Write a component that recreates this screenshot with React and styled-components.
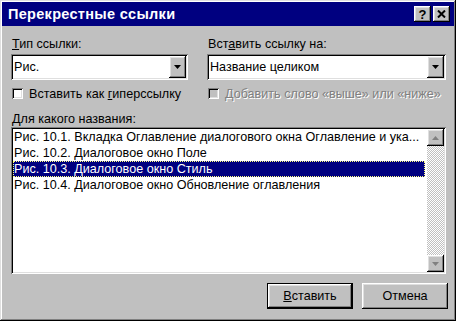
import styled, { createGlobalStyle } from 'styled-components';

const GlobalStyle = createGlobalStyle`
  html, body {
    margin: 0;
    padding: 0;
    background: #c0c0c0;
  }
  body {
    font-family: "Liberation Sans", Arial, sans-serif;
    font-size: 12.6px;
    color: #000;
  }
`;

const raisedShadow = `
  box-shadow: inset -1px -1px #000, inset 1px 1px #fff,
    inset -2px -2px #808080, inset 2px 2px #dfdfdf;
`;

const sunkenShadow = `
  box-shadow: inset 1px 1px #808080, inset -1px -1px #fff,
    inset 2px 2px #000, inset -2px -2px #dfdfdf;
`;

const Window = styled.div`
  width: 456px;
  height: 321px;
  box-sizing: border-box;
  padding: 2px;
  background: #c0c0c0;
  box-shadow: inset -1px -1px #000, inset 1px 1px #dfdfdf,
    inset -2px -2px #808080, inset 2px 2px #fff;
  display: flex;
  flex-direction: column;
`;

const TitleBar = styled.div`
  height: 24px;
  background: #000080;
  display: flex;
  align-items: center;
  justify-content: space-between;
  padding: 0 4px 0 6px;
`;

const Title = styled.span`
  color: #fff;
  font-weight: bold;
  font-size: 14.5px;
  letter-spacing: 0.3px;
`;

const TitleButtons = styled.div`
  display: flex;
  gap: 2px;
`;

const TitleButton = styled.div`
  width: 17px;
  height: 16px;
  background: #c0c0c0;
  ${raisedShadow}
  display: flex;
  align-items: center;
  justify-content: center;
  font-weight: bold;
  font-size: 13px;
  line-height: 1;
`;

const Content = styled.div`
  flex: 1;
  display: flex;
  flex-direction: column;
  padding: 10px 8px 0 9px;
`;

const Columns = styled.div`
  display: grid;
  grid-template-columns: 177px 1fr;
  column-gap: 19px;
`;

const Field = styled.div`
  display: flex;
  flex-direction: column;
`;

const Label = styled.div`
  height: 16px;
  line-height: 16px;
  padding-left: 1px;
`;

const Combo = styled.div`
  margin-top: 2px;
  height: 26px;
  box-sizing: border-box;
  padding: 2px;
  background: #fff;
  ${sunkenShadow}
  display: flex;
  align-items: stretch;
`;

const ComboText = styled.div`
  flex: 1;
  padding-left: 1px;
  display: flex;
  align-items: center;
`;

const ComboButton = styled.div`
  width: 17px;
  background: #c0c0c0;
  ${raisedShadow}
  display: flex;
  align-items: center;
  justify-content: center;
`;

const CheckRow = styled.div`
  margin-top: 6px;
  height: 15px;
  display: flex;
  align-items: center;
  gap: 6px;
  padding-left: 1px;
  color: ${p => (p.$disabled ? '#808080' : '#000')};
  text-shadow: ${p => (p.$disabled ? '1px 1px #fff' : 'none')};
  white-space: nowrap;
`;

const CheckBox = styled.div`
  width: 11px;
  height: 11px;
  flex: none;
  background: ${p => (p.$disabled ? '#c0c0c0' : '#fff')};
  ${sunkenShadow}
`;

const ListLabel = styled(Label)`
  margin-top: 11px;
  height: 15px;
  line-height: 14px;
`;

const ListBox = styled.div`
  height: 147px;
  box-sizing: border-box;
  padding: 2px;
  background: #fff;
  ${sunkenShadow}
  display: flex;
`;

const Items = styled.div`
  flex: 1;
  display: flex;
  flex-direction: column;
  padding-right: 2px;
`;

const Item = styled.div`
  height: 16px;
  line-height: 16px;
  padding-left: 1px;
  white-space: nowrap;
  overflow: hidden;
  background: ${p => (p.$selected ? '#000080' : 'transparent')};
  color: ${p => (p.$selected ? '#fff' : '#000')};
  outline: ${p => (p.$selected ? '1px dotted #ffff80' : 'none')};
  outline-offset: -1px;
`;

const ScrollBar = styled.div`
  width: 17px;
  display: flex;
  flex-direction: column;
  background: repeating-conic-gradient(#c0c0c0 0 25%, #fff 0 50%) 0 0 / 2px 2px;
`;

const ScrollTrack = styled.div`
  flex: 1;
`;

const ScrollButton = styled.div`
  height: 17px;
  background: #c0c0c0;
  ${raisedShadow}
  display: flex;
  align-items: center;
  justify-content: center;
`;

const ButtonRow = styled.div`
  margin-top: 9px;
  margin-right: -2px;
  display: flex;
  justify-content: flex-end;
  gap: 9px;
`;

const Button = styled.div`
  width: 86px;
  height: 26px;
  box-sizing: border-box;
  background: #c0c0c0;
  display: flex;
  align-items: center;
  justify-content: center;
  ${p =>
    p.$default
      ? `box-shadow: inset 0 0 0 1px #000, inset -2px -2px #000, inset 2px 2px #fff,
          inset -3px -3px #808080, inset 3px 3px #dfdfdf;`
      : raisedShadow}
`;

const Arrow = ({ up, color = '#000' }) => (
  <svg width="7" height="4" viewBox="0 0 7 4">
    <path d={up ? 'M3.5 0L7 4H0Z' : 'M0 0H7L3.5 4Z'} fill={color} />
  </svg>
);

const CloseIcon = () => (
  <svg width="9" height="8" viewBox="0 0 9 8">
    <path d="M1 0.5L8 7.5M8 0.5L1 7.5" stroke="#000" strokeWidth="2" />
  </svg>
);

const items = [
  'Рис. 10.1. Вкладка Оглавление диалогового окна Оглавление и ука...',
  'Рис. 10.2. Диалоговое окно Поле',
  'Рис. 10.3. Диалоговое окно Стиль',
  'Рис. 10.4. Диалоговое окно Обновление оглавления',
];

export default function App() {
  return (
    <>
      <GlobalStyle />
      <Window>
        <TitleBar>
          <Title>Перекрестные ссылки</Title>
          <TitleButtons>
            <TitleButton>?</TitleButton>
            <TitleButton>
              <CloseIcon />
            </TitleButton>
          </TitleButtons>
        </TitleBar>
        <Content>
          <Columns>
            <Field>
              <Label>
                <u>Т</u>ип ссылки:
              </Label>
              <Combo>
                <ComboText>Рис.</ComboText>
                <ComboButton>
                  <Arrow />
                </ComboButton>
              </Combo>
              <CheckRow>
                <CheckBox />
                <span>
                  Вставить как <u>г</u>иперссылку
                </span>
              </CheckRow>
            </Field>
            <Field>
              <Label>
                Вст<u>а</u>вить ссылку на:
              </Label>
              <Combo>
                <ComboText>Название целиком</ComboText>
                <ComboButton>
                  <Arrow />
                </ComboButton>
              </Combo>
              <CheckRow $disabled>
                <CheckBox $disabled />
                <span>Добавить слово «выше» или «ниже»</span>
              </CheckRow>
            </Field>
          </Columns>
          <ListLabel>
            <u>Д</u>ля какого названия:
          </ListLabel>
          <ListBox>
            <Items>
              {items.map((text, i) => (
                <Item key={i} $selected={i === 2}>
                  {text}
                </Item>
              ))}
            </Items>
            <ScrollBar>
              <ScrollButton>
                <Arrow up color="#808080" />
              </ScrollButton>
              <ScrollTrack />
              <ScrollButton>
                <Arrow color="#808080" />
              </ScrollButton>
            </ScrollBar>
          </ListBox>
          <ButtonRow>
            <Button $default>
              <span>
                <u>В</u>ставить
              </span>
            </Button>
            <Button>Отмена</Button>
          </ButtonRow>
        </Content>
      </Window>
    </>
  );
}
